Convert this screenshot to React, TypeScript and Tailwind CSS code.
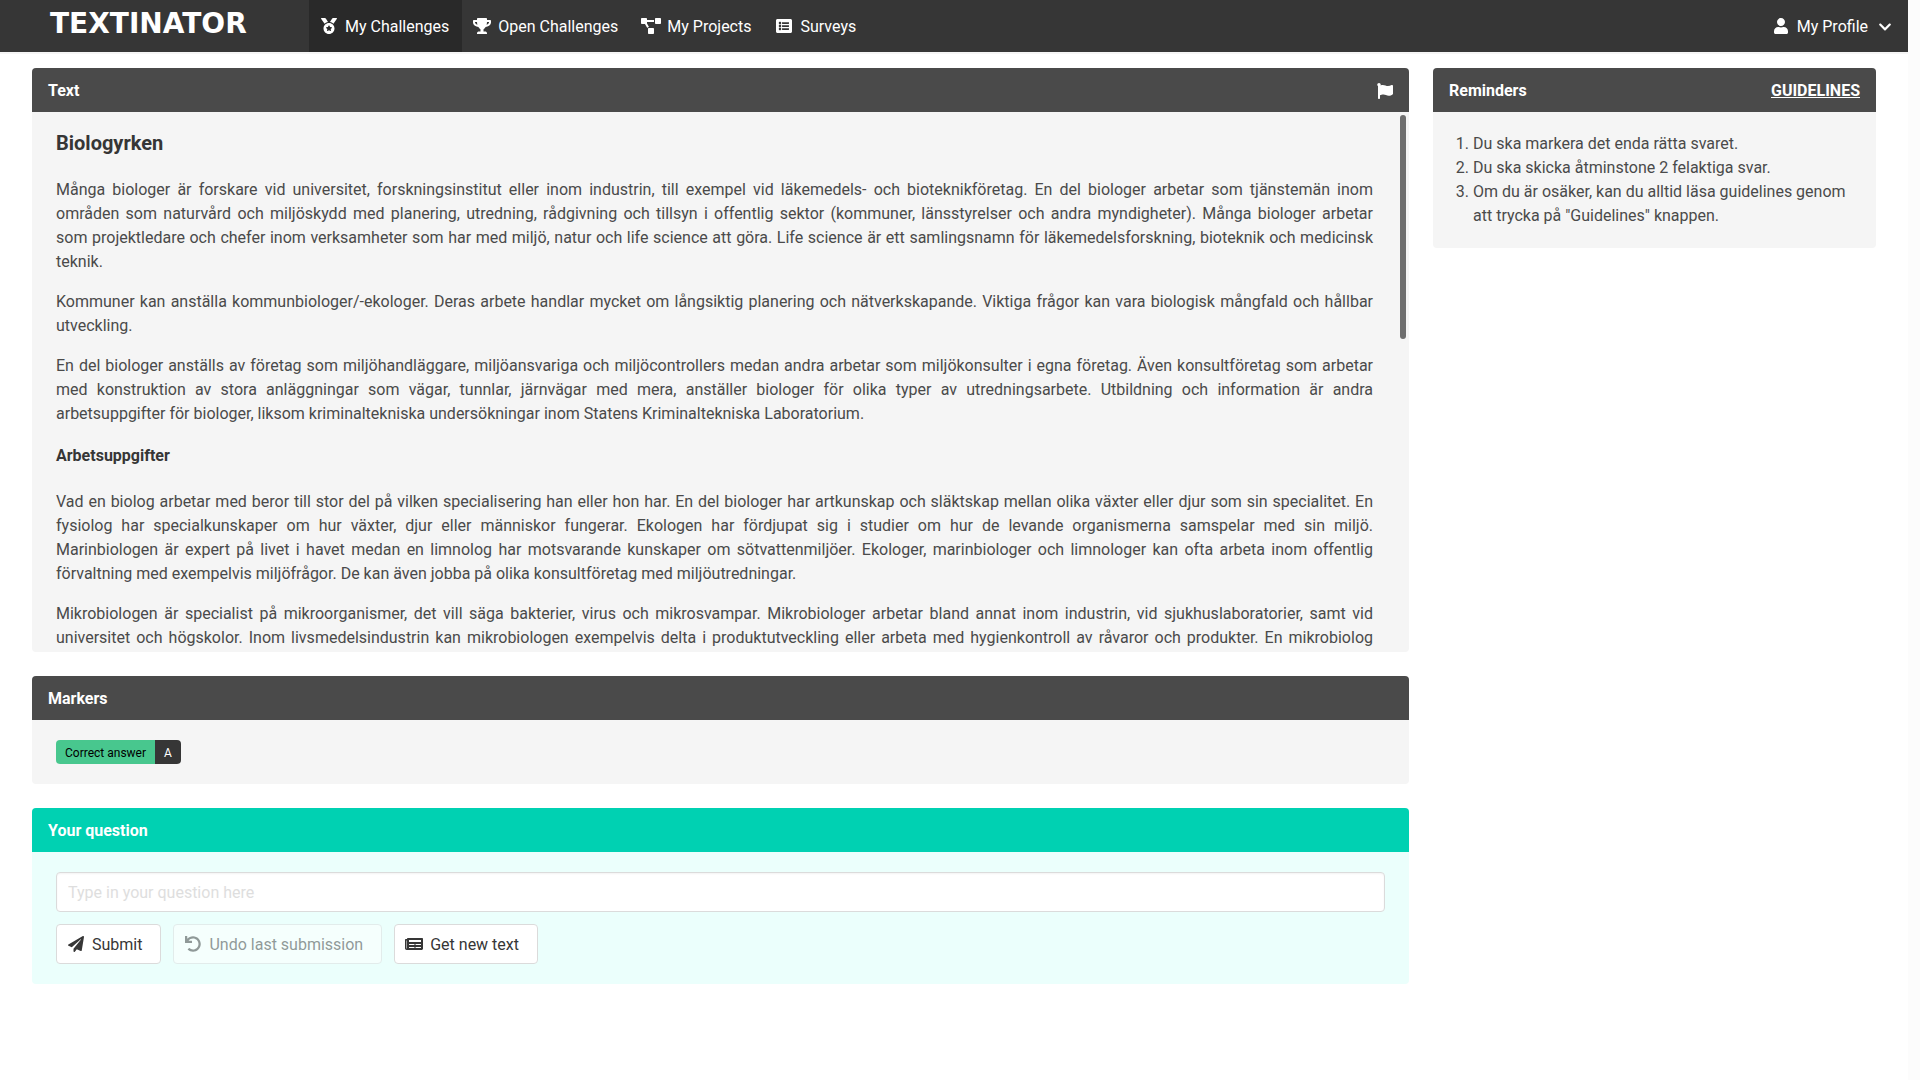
import React from "react";
import {
  FaMedal,
  FaTrophy,
  FaProjectDiagram,
  FaListAlt,
  FaUser,
  FaChevronDown,
  FaFlag,
  FaPaperPlane,
  FaUndo,
  FaNewspaper,
} from "react-icons/fa";

const navItems = [
  { label: "My Challenges", Icon: FaMedal, size: "size-4", active: true },
  { label: "Open Challenges", Icon: FaTrophy, size: "size-[18px]", active: false },
  { label: "My Projects", Icon: FaProjectDiagram, size: "size-5", active: false },
  { label: "Surveys", Icon: FaListAlt, size: "size-4", active: false },
];

function Navbar() {
  return (
    <header className="flex h-[52px] items-stretch bg-[#363636] text-white shadow-[0_2px_0_0_#f5f5f5]">
      <a
        href="#home"
        className="flex w-[309px] items-center pb-1 pl-[50px] font-['DejaVu_Sans',sans-serif] text-[28px] leading-none font-bold"
      >
        TEXTINATOR
      </a>
      <nav className="flex flex-1 items-stretch">
        {navItems.map(({ label, Icon, size, active }) => (
          <a
            key={label}
            href="#nav"
            className={`flex items-center gap-1 pr-[13px] pl-2 ${active ? "bg-[#292929]" : ""}`}
          >
            <span className="flex w-6 justify-center">
              <Icon className={`${size} shrink-0`} />
            </span>
            <span className="pt-0.5">{label}</span>
          </a>
        ))}
      </nav>
      <button type="button" className="flex items-center pr-4 pl-2">
        <span className="flex w-6 justify-center">
          <FaUser className="size-4" />
        </span>
        <span className="ml-1 pt-0.5">My Profile</span>
        <FaChevronDown className="mt-0.5 ml-2.5 size-3.5" />
      </button>
    </header>
  );
}

function Panel({
  title,
  action,
  teal,
  children,
}: {
  title: string;
  action?: React.ReactNode;
  teal?: boolean;
  children: React.ReactNode;
}) {
  return (
    <section className={`overflow-hidden rounded ${teal ? "bg-[#ebfffc]" : "bg-[#f5f5f5]"}`}>
      <div
        className={`flex h-11 items-center justify-between px-4 pt-0.5 font-bold text-white ${
          teal ? "bg-[#00d1b2]" : "bg-[#4a4a4a]"
        }`}
      >
        <h2>{title}</h2>
        {action}
      </div>
      {children}
    </section>
  );
}

/* A justified paragraph; every part starts on a new line. */
function Paragraph({ parts, fill }: { parts: string[]; fill?: boolean }) {
  return (
    <p className="mb-4 text-justify">
      {parts.map((part, i) => (
        <span
          key={i}
          className={`block ${i < parts.length - 1 || fill ? "[text-align-last:justify]" : ""}`}
        >
          {part}
        </span>
      ))}
    </p>
  );
}

const introduction = [
  [
    "Många biologer är forskare vid universitet, forskningsinstitut eller inom industrin, till exempel vid läkemedels- och bioteknikföretag. En del biologer arbetar som tjänstemän inom",
    "områden som naturvård och miljöskydd med planering, utredning, rådgivning och tillsyn i offentlig sektor (kommuner, länsstyrelser och andra myndigheter). Många biologer arbetar",
    "som projektledare och chefer inom verksamheter som har med miljö, natur och life science att göra. Life science är ett samlingsnamn för läkemedelsforskning, bioteknik och medicinsk",
    "teknik.",
  ],
  [
    "Kommuner kan anställa kommunbiologer/-ekologer. Deras arbete handlar mycket om långsiktig planering och nätverkskapande. Viktiga frågor kan vara biologisk mångfald och hållbar utveckling.",
  ],
  [
    "En del biologer anställs av företag som miljöhandläggare, miljöansvariga och miljöcontrollers medan andra arbetar som miljökonsulter i egna företag. Även konsultföretag som arbetar med konstruktion av stora anläggningar som vägar, tunnlar, järnvägar med mera, anställer biologer för olika typer av utredningsarbete. Utbildning och information är andra",
    "arbetsuppgifter för biologer, liksom kriminaltekniska undersökningar inom Statens Kriminaltekniska Laboratorium.",
  ],
];

const duties = [
  "Vad en biolog arbetar med beror till stor del på vilken specialisering han eller hon har. En del biologer har artkunskap och släktskap mellan olika växter eller djur som sin specialitet. En fysiolog har specialkunskaper om hur växter, djur eller människor fungerar. Ekologen har fördjupat sig i studier om hur de levande organismerna samspelar med sin miljö.",
  "Marinbiologen är expert på livet i havet medan en limnolog har motsvarande kunskaper om sötvattenmiljöer. Ekologer, marinbiologer och limnologer kan ofta arbeta inom offentlig",
  "förvaltning med exempelvis miljöfrågor. De kan även jobba på olika konsultföretag med miljöutredningar.",
];

const microbiology = [
  "Mikrobiologen är specialist på mikroorganismer, det vill säga bakterier, virus och mikrosvampar. Mikrobiologer arbetar bland annat inom industrin, vid sjukhuslaboratorier, samt vid universitet och högskolor. Inom livsmedelsindustrin kan mikrobiologen exempelvis delta i produktutveckling eller arbeta med hygienkontroll av råvaror och produkter. En mikrobiolog",
];

const buttonClass =
  "flex h-10 items-center rounded border border-[#dbdbdb] bg-white pr-[18px] pl-[7px] text-[#363636] disabled:opacity-50";

export default function App() {
  return (
    <div className="min-h-screen bg-[#fcfcfc] pr-3 font-[Roboto,sans-serif] text-base leading-6 text-[#4a4a4a]">
      <div className="min-h-screen bg-white">
        <Navbar />
        <main className="flex items-start px-5 pt-4">
          <div className="flex w-3/4 flex-col gap-6 px-3">
            <Panel
              title="Text"
              action={
                <button type="button" aria-label="Flag text">
                  <FaFlag className="size-4" />
                </button>
              }
            >
              <div className="relative h-[540px] overflow-hidden pt-5 pr-9 pl-6">
                <h3 className="mb-6 text-xl leading-[22px] font-bold text-[#363636]">Biologyrken</h3>
                {introduction.map((parts, i) => (
                  <Paragraph key={i} parts={parts} />
                ))}
                <h4 className="mt-5 mb-6 leading-5 font-bold text-[#363636]">Arbetsuppgifter</h4>
                <Paragraph parts={duties} />
                <Paragraph parts={microbiology} fill />
                <div className="absolute top-[3px] right-[3px] h-56 w-1.5 rounded-full bg-[#6e6e6e]" />
              </div>
            </Panel>

            <Panel title="Markers">
              <div className="px-6 py-5">
                <button type="button" className="flex h-6 items-center overflow-hidden rounded text-xs">
                  <span className="flex h-full items-center bg-[#48c78e] px-[9px] pt-0.5 text-black">
                    Correct answer
                  </span>
                  <span className="flex h-full items-center bg-[#363636] px-[9px] pt-0.5 text-white">A</span>
                </button>
              </div>
            </Panel>

            <Panel title="Your question" teal>
              <form className="px-6 py-5" onSubmit={(e) => e.preventDefault()}>
                <input
                  type="text"
                  aria-label="Your question"
                  placeholder="Type in your question here"
                  className="block h-10 w-full rounded border border-[#dbdbdb] bg-white px-[11px] shadow-[inset_0_1px_2px_rgba(10,10,10,0.05)] outline-none placeholder:text-[#dedede]"
                />
                <div className="mt-3 flex gap-3">
                  <button type="submit" className={buttonClass}>
                    <span className="mr-1 flex w-6 justify-center">
                      <FaPaperPlane className="size-4" />
                    </span>
                    <span className="pt-0.5">Submit</span>
                  </button>
                  <button type="button" disabled className={buttonClass}>
                    <span className="mr-1 flex w-6 justify-center">
                      <FaUndo className="size-4" />
                    </span>
                    <span className="pt-0.5">Undo last submission</span>
                  </button>
                  <button type="button" className={buttonClass}>
                    <span className="mr-1 flex w-6 justify-center">
                      <FaNewspaper className="size-[18px]" />
                    </span>
                    <span className="pt-0.5">Get new text</span>
                  </button>
                </div>
              </form>
            </Panel>
          </div>

          <aside className="w-1/4 px-3">
            <Panel
              title="Reminders"
              action={
                <a href="#guidelines" className="underline">
                  GUIDELINES
                </a>
              }
            >
              <ol className="list-decimal py-5 pr-6 pl-10">
                <li>Du ska markera det enda rätta svaret.</li>
                <li>Du ska skicka åtminstone 2 felaktiga svar.</li>
                <li>Om du är osäker, kan du alltid läsa guidelines genom att trycka på "Guidelines" knappen.</li>
              </ol>
            </Panel>
          </aside>
        </main>
      </div>
    </div>
  );
}
